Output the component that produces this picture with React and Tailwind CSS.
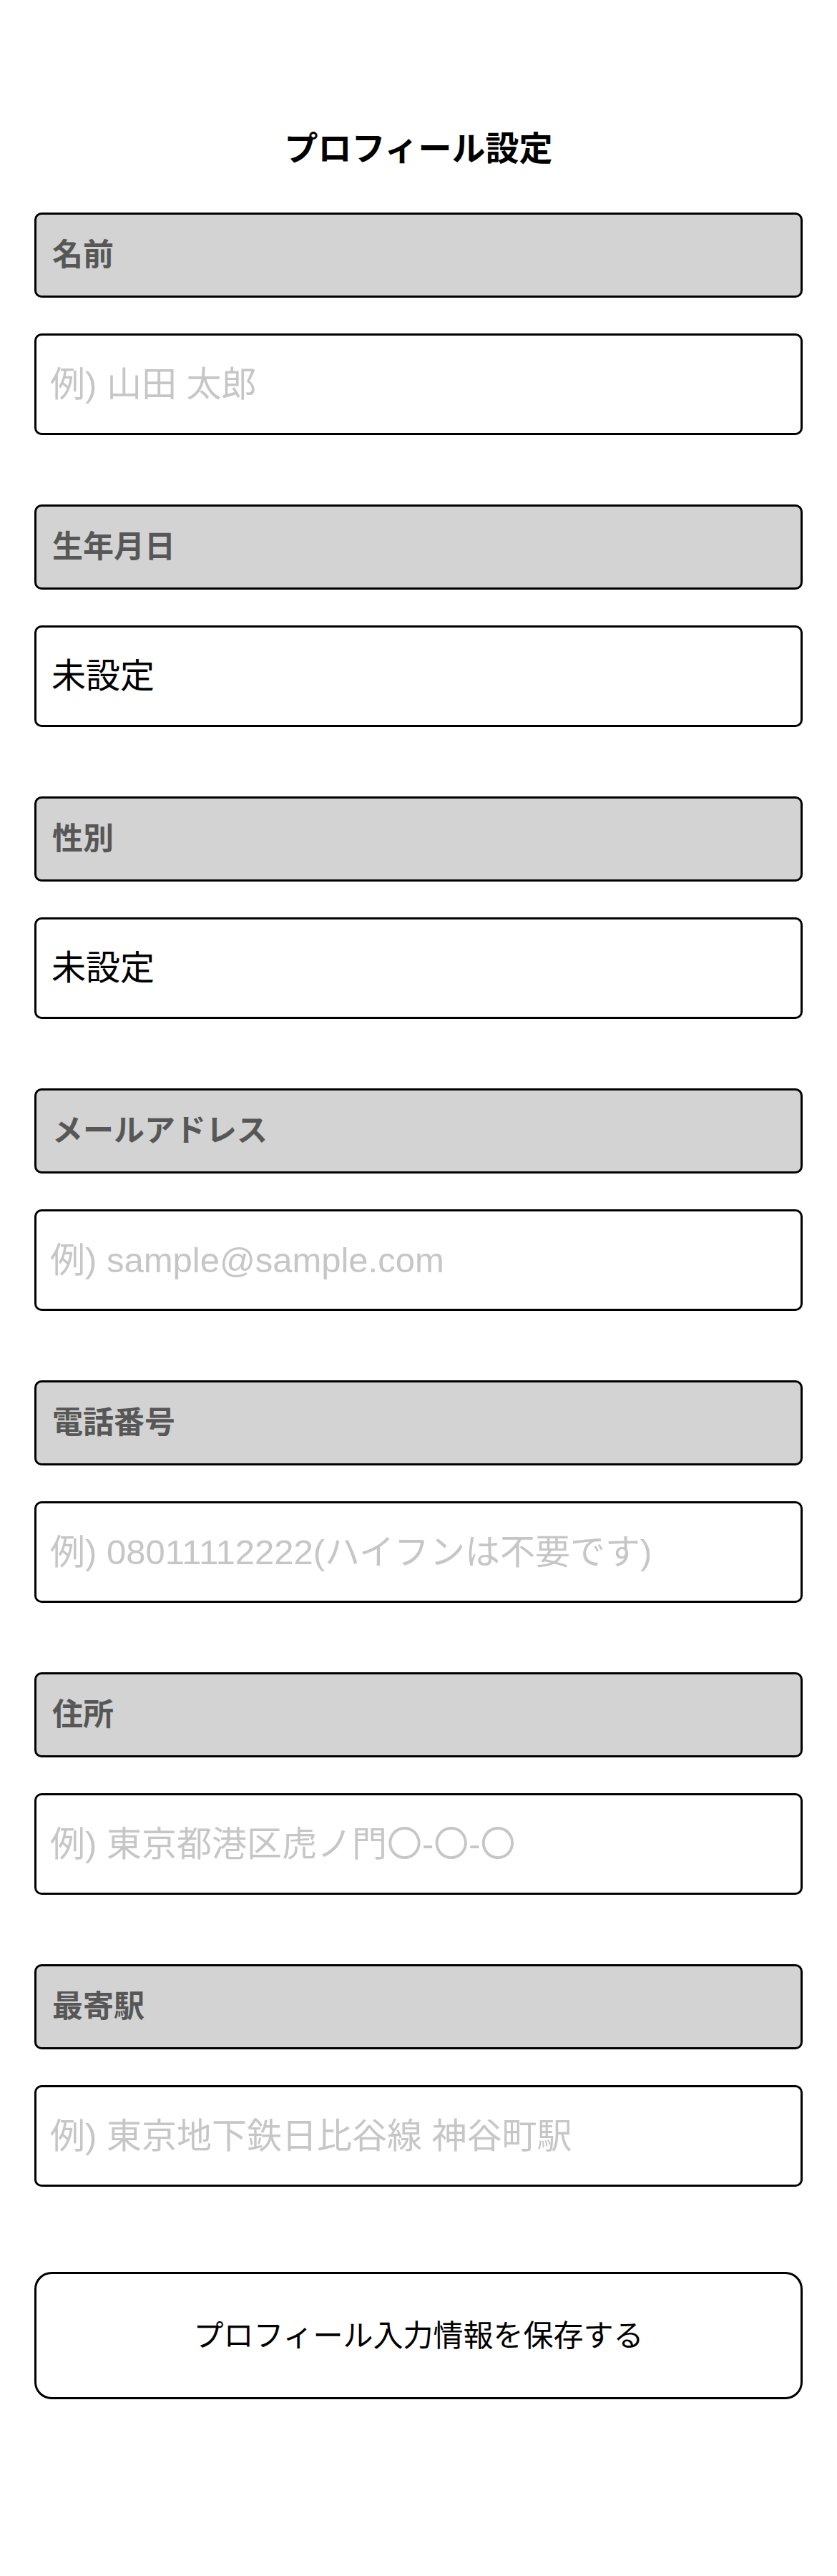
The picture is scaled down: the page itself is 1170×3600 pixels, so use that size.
import { useState } from 'react';

const fields = [
  { key: 'name', label: '名前', placeholder: '例) 山田 太郎' },
  { key: 'birthday', label: '生年月日', value: '未設定' },
  { key: 'gender', label: '性別', value: '未設定' },
  { key: 'email', label: 'メールアドレス', placeholder: '例) sample@sample.com' },
  { key: 'tel', label: '電話番号', placeholder: '例) 08011112222(ハイフンは不要です)' },
  { key: 'address', label: '住所', placeholder: '例) 東京都港区虎ノ門〇-〇-〇' },
  { key: 'station', label: '最寄駅', placeholder: '例) 東京地下鉄日比谷線 神谷町駅' },
];

export default function App() {
  const [form, setForm] = useState({});

  return (
    <div
      className="min-h-screen bg-white px-[48px] pt-[172px] pb-[200px] text-black"
      style={{ fontFamily: '"Liberation Sans", "Noto Sans CJK JP", sans-serif' }}
    >
      {/* タイトル */}
      <h1 className="text-center text-[47px] font-bold leading-[72px]">プロフィール設定</h1>

      <div className="mt-[53px] flex flex-col gap-[97px]">
        {fields.map((f) => (
          <div key={f.key} className="flex flex-col gap-[50px]">
            <div className="flex h-[119px] items-center rounded-[10px] border-[3px] border-black bg-[#d3d3d3] px-[22px]">
              <span className="text-[43px] font-bold text-[#575757]">{f.label}</span>
            </div>
            {f.value ? (
              <div className="flex h-[142px] items-center rounded-[10px] border-[3px] border-black bg-white px-[21px] text-[48px]">
                {f.value}
              </div>
            ) : (
              <input
                type="text"
                value={form[f.key] || ''}
                onChange={(e) => setForm({ ...form, [f.key]: e.target.value })}
                placeholder={f.placeholder}
                className="h-[142px] w-full rounded-[10px] border-[3px] border-black bg-white px-[19px] text-[49px] outline-none placeholder:text-[#c6c6c6]"
              />
            )}
          </div>
        ))}
      </div>

      {/* 保存ボタン */}
      <button
        type="button"
        className="mt-[119px] flex h-[178px] w-full items-center justify-center rounded-[24px] border-[3px] border-black bg-white text-[42px] text-black"
      >
        プロフィール入力情報を保存する
      </button>
    </div>
  );
}
